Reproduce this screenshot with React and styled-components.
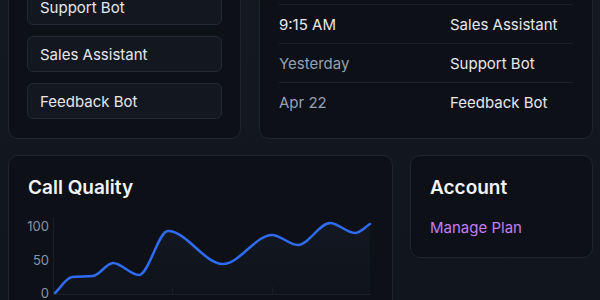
import React from 'react';
import styled, { createGlobalStyle } from 'styled-components';

const GlobalStyle = createGlobalStyle`
  html, body {
    margin: 0;
    padding: 0;
    background: #12161d;
    font-family: Inter, "Noto Sans", sans-serif;
    color: #e5e7eb;
    overflow: hidden;
  }
`;

const Page = styled.div`
  width: 600px;
  height: 300px;
  overflow: hidden;
  background: linear-gradient(180deg, #141820 0%, #11151c 100%);
`;

const Content = styled.div`
  padding: 0 7px 0 8px;
  margin-top: -96px;
  display: flex;
  flex-direction: column;
  gap: 16px;
`;

const Row = styled.div`
  display: grid;
  grid-template-columns: ${p => p.$cols};
  column-gap: ${p => p.$gap || 18}px;
  align-items: ${p => p.$align || 'stretch'};
`;

const Card = styled.section`
  box-sizing: border-box;
  background: #0d1017;
  border: 1px solid #1f242e;
  border-radius: 10px;
  padding: 19px ${p => p.$side || 19}px ${p => p.$bottom || 19}px;
  display: flex;
  flex-direction: column;
  justify-content: ${p => p.$justify || 'flex-start'};
`;

const Title = styled.h2`
  margin: 0;
  font-size: 19px;
  line-height: 26px;
  font-weight: 600;
  color: #f3f4f6;
`;

const BotList = styled.div`
  display: flex;
  flex-direction: column;
  gap: 11px;
  margin-top: 16px;
`;

const BotButton = styled.button`
  box-sizing: border-box;
  height: 36px;
  padding: 0 12px;
  text-align: left;
  font-family: inherit;
  font-size: 15px;
  color: #e5e7eb;
  background: #131720;
  border: 1px solid #232935;
  border-radius: 6px;
`;

const Table = styled.div`
  margin-top: 14px;
  display: flex;
  flex-direction: column;
`;

const TableRow = styled.div`
  box-sizing: border-box;
  display: grid;
  grid-template-columns: 171px 1fr;
  height: ${p => (p.$head ? 40 : 39)}px;
  align-items: center;
  border-top: ${p => (p.$head ? 'none' : '1px solid #1b2029')};
  font-size: 15px;
`;

const Cell = styled.span`
  color: ${p => (p.$muted ? '#94a0b4' : '#e6e8ec')};
`;

const ManageLink = styled.a`
  margin-top: 17px;
  font-size: 15px;
  line-height: 20px;
  color: #c27ef5;
  text-decoration: none;
`;

const ChartSvg = styled.svg`
  display: block;
  margin-top: 9px;
  overflow: visible;
`;

const AxisLabel = styled.text`
  font-family: Inter, "Noto Sans", sans-serif;
  font-size: 13px;
  fill: #8a94a6;
`;

const points = [
  [27, 83], [44, 67], [65, 66], [85, 53], [111, 65], [140, 21],
  [195, 54], [244, 25], [270, 35], [302, 13], [327, 23], [342, 14],
];

function smoothPath(pts) {
  const n = pts.length;
  const slopes = [];
  for (let i = 0; i < n; i++) {
    if (i === 0) {
      slopes.push((pts[1][1] - pts[0][1]) / (pts[1][0] - pts[0][0]));
    } else if (i === n - 1) {
      slopes.push((pts[i][1] - pts[i - 1][1]) / (pts[i][0] - pts[i - 1][0]));
    } else {
      const a = (pts[i][1] - pts[i - 1][1]) / (pts[i][0] - pts[i - 1][0]);
      const b = (pts[i + 1][1] - pts[i][1]) / (pts[i + 1][0] - pts[i][0]);
      slopes.push(a * b <= 0 ? 0 : (2 * a * b) / (a + b));
    }
  }
  let d = `M${pts[0][0]},${pts[0][1]}`;
  for (let i = 0; i < n - 1; i++) {
    const [x0, y0] = pts[i];
    const [x1, y1] = pts[i + 1];
    const dx = (x1 - x0) / 3;
    d += ` C${x0 + dx},${y0 + slopes[i] * dx} ${x1 - dx},${y1 - slopes[i + 1] * dx} ${x1},${y1}`;
  }
  return d;
}

function CallChart() {
  const line = smoothPath(points);
  const area = `${line} L342,84 L27,84 Z`;
  return (
    <ChartSvg width="345" height="110" viewBox="0 0 345 110">
      <defs>
        <linearGradient id="fillArea" x1="0" y1="0" x2="0" y2="1">
          <stop offset="0%" stopColor="#1a1f2c" stopOpacity="0.55" />
          <stop offset="100%" stopColor="#141925" stopOpacity="0.3" />
        </linearGradient>
      </defs>
      <line x1="25.5" y1="8" x2="25.5" y2="84" stroke="#1a1f28" />
      <line x1="25" y1="84.5" x2="343" y2="84.5" stroke="#1a1f28" />
      <line x1="144.5" y1="77" x2="144.5" y2="84" stroke="#1a1f28" />
      <line x1="244.5" y1="77" x2="244.5" y2="84" stroke="#1a1f28" />
      <path d={area} fill="url(#fillArea)" />
      <path d={line} fill="none" stroke="#2f6cf5" strokeWidth="2.5" strokeLinecap="round" />
      <AxisLabel x="21" y="21" textAnchor="end">100</AxisLabel>
      <AxisLabel x="21" y="55" textAnchor="end">50</AxisLabel>
      <AxisLabel x="21" y="88" textAnchor="end">0</AxisLabel>
    </ChartSvg>
  );
}

const bots = ['Support Bot', 'Sales Assistant', 'Feedback Bot'];

const calls = [
  { time: '9:15 AM', bot: 'Sales Assistant', muted: false },
  { time: 'Yesterday', bot: 'Support Bot', muted: true },
  { time: 'Apr 22', bot: 'Feedback Bot', muted: true },
];

export default function App() {
  return (
    <Page>
      <GlobalStyle />
      <Content>
        <Row $cols="233px 334px">
          <Card $justify="flex-end" $bottom={19} $side={18}>
            <Title>Bots</Title>
            <BotList>
              {bots.map(b => (
                <BotButton key={b}>{b}</BotButton>
              ))}
            </BotList>
          </Card>
          <Card $justify="flex-end" $bottom={17}>
            <Title>Recent Calls</Title>
            <Table>
              <TableRow $head>
                <Cell $muted>Time</Cell>
                <Cell $muted>Bot</Cell>
              </TableRow>
              {calls.map(c => (
                <TableRow key={c.time}>
                  <Cell $muted={c.muted}>{c.time}</Cell>
                  <Cell>{c.bot}</Cell>
                </TableRow>
              ))}
            </Table>
          </Card>
        </Row>
        <Row $cols="385px 183px" $gap={17} $align="start">
          <Card>
            <Title>Call Quality</Title>
            <CallChart />
          </Card>
          <Card>
            <Title>Account</Title>
            <ManageLink href="#">Manage Plan</ManageLink>
          </Card>
        </Row>
      </Content>
    </Page>
  );
}
